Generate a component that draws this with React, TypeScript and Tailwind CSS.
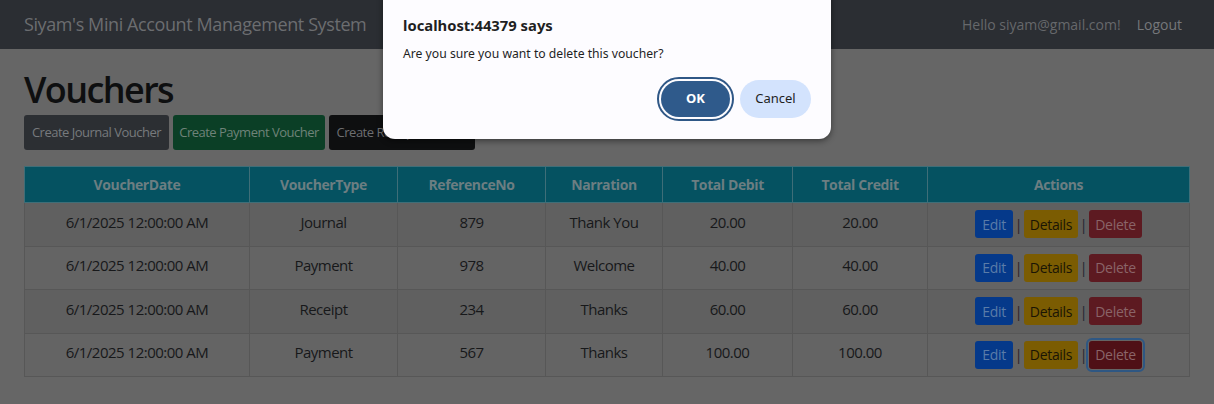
import React from "react";

const rows = [
  { date: "6/1/2025 12:00:00 AM", type: "Journal", ref: "879", nar: "Thank You", debit: "20.00", credit: "20.00" },
  { date: "6/1/2025 12:00:00 AM", type: "Payment", ref: "978", nar: "Welcome", debit: "40.00", credit: "40.00" },
  { date: "6/1/2025 12:00:00 AM", type: "Receipt", ref: "234", nar: "Thanks", debit: "60.00", credit: "60.00" },
  { date: "6/1/2025 12:00:00 AM", type: "Payment", ref: "567", nar: "Thanks", debit: "100.00", credit: "100.00" },
];

const headers = ["VoucherDate", "VoucherType", "ReferenceNo", "Narration", "Total Debit", "Total Credit", "Actions"];
const widths = ["w-[225px]", "w-[148px]", "w-[148px]", "w-[117px]", "w-[130px]", "w-[135px]", "w-[262px]"];

export default function App() {
  return (
    <div className="relative w-[1214px] h-[404px] overflow-hidden bg-[#666666]" style={{ fontFamily: '"Open Sans", "Noto Sans", sans-serif' }}>
      {/* Navbar */}
      <nav className="h-[49px] bg-[#2b2e33] flex items-center justify-between pl-6 pr-8">
        <span className="text-[18px] tracking-[-0.4px] text-[#6b6d70] pb-px">Siyam's Mini Account Management System</span>
        <div className="flex items-center gap-4 text-[14px]">
          <span className="text-[#66686b]">Hello siyam@gmail.com!</span>
          <span className="text-[#75777a]">Logout</span>
        </div>
      </nav>

      {/* Main */}
      <main className="px-6 pt-[17px]">
        <h1 className="text-[36px] leading-[48px] font-semibold tracking-[-1.6px] text-[#0e0f10] mb-px">Vouchers</h1>
        <div className="flex gap-1 text-[13px] tracking-[-0.5px]">
          <div className="h-[35px] w-[145px] flex items-center justify-center rounded-[3px] bg-[#2c2f33] text-[#777a7d]">Create Journal Voucher</div>
          <div className="h-[35px] w-[152px] flex items-center justify-center rounded-[3px] bg-[#0b3f26] text-[#6f8379]">Create Payment Voucher</div>
          <div className="h-[35px] w-[146px] flex items-center justify-center rounded-[3px] bg-[#0e0f10] text-[#6d6e70]">Create Receipt Voucher</div>
        </div>

        <table className="mt-4 border-collapse table-fixed w-[1165px] text-[15px] tracking-[-0.5px]">
          <thead>
            <tr className="bg-[#055261] h-[36px]">
              {headers.map((h, i) => (
                <th key={h} className={`${widths[i]} border border-[#3f6e78] text-[14px] tracking-[-0.4px] font-bold text-[#6c7e82] text-center`}>{h}</th>
              ))}
            </tr>
          </thead>
          <tbody>
            {rows.map((r, idx) => (
              <tr key={idx} className={`h-[43.5px] ${idx % 2 === 0 ? "bg-[#606060]" : "bg-[#646464]"}`}>
                {[r.date, r.type, r.ref, r.nar, r.debit, r.credit].map((c, i) => (
                  <td key={i} className="border border-[#575757] text-center text-[#17181a] pb-[5px]">{c}</td>
                ))}
                <td className="border border-[#575757]">
                  <div className="flex items-center justify-center gap-[4px] text-[14px] tracking-[-0.3px]">
                    <span className="h-[28px] w-[38px] flex items-center justify-center rounded-[3px] bg-[#05398a] text-[#5a7ca8]">Edit</span>
                    <span className="w-[3px] flex justify-center text-[#2a1f2a]">|</span>
                    <span className="h-[28px] w-[54px] flex items-center justify-center rounded-[3px] bg-[#7b5c02] text-[#1a1505]">Details</span>
                    <span className="w-[3px] flex justify-center text-[#1f2430]">|</span>
                    {idx === 3 ? (
                      <span className="h-[28px] w-[53px] flex items-center justify-center rounded-[3px] bg-[#4f1016] text-[#8a6468] outline-2 outline-offset-1 outline-[#2e5783]">Delete</span>
                    ) : (
                      <span className="h-[28px] w-[53px] flex items-center justify-center rounded-[3px] bg-[#5d1a21] text-[#8a6468]">Delete</span>
                    )}
                  </div>
                </td>
              </tr>
            ))}
          </tbody>
        </table>
      </main>

      {/* Confirm dialog */}
      <div className="absolute left-[383px] top-[-12px] w-[448px] h-[151px] bg-[#fdfcff] rounded-[12px] shadow-[0_2px_6px_rgba(0,0,0,0.45)] px-5 pt-[24px]" style={{ fontFamily: '"Noto Sans", "Open Sans", sans-serif' }}>
        <div className="text-[14.8px] font-bold text-[#1f1f1f] leading-[26px]">localhost:44379 says</div>
        <div className="mt-[6px] text-[12.2px] text-[#1f1f1f] leading-[20px]">Are you sure you want to delete this voucher?</div>
        <div className="mt-[13px] flex justify-end gap-[6px] pr-0">
          <div className="h-[44px] w-[77px] rounded-full border-2 border-[#2f5786] p-[2px]">
            <div className="h-full w-full rounded-full bg-[#2f5a8b] flex items-center justify-center text-[13px] font-bold text-white">OK</div>
          </div>
          <div className="mt-[3px] h-[38px] w-[71px] rounded-full bg-[#d3e3fd] flex items-center justify-center text-[13px] text-[#1f1f1f]">Cancel</div>
        </div>
      </div>
    </div>
  );
}
